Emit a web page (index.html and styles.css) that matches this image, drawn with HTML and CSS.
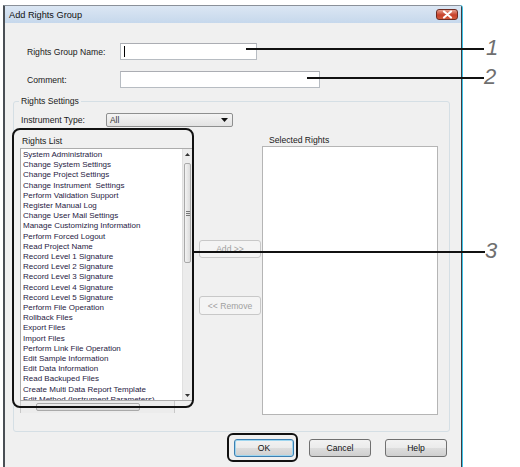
FILE: index.html
```html
<!DOCTYPE html>
<html>
<head>
<meta charset="utf-8">
<link rel="stylesheet" href="styles.css">
</head>
<body>
<div class="page">
  <div class="window">
    <div class="titlebar">
      <span class="title">Add Rights Group</span>
      <span class="close"><svg width="13" height="9" viewBox="0 0 13 9"><path d="M3 1.5 L10 7.5 M10 1.5 L3 7.5" stroke="#fff" stroke-width="2.2" stroke-linecap="round"/></svg></span>
    </div>
    <div class="body">
      <div class="row row1">
        <label class="lbl">Rights Group Name:</label>
        <div class="input w137"><span class="caret"></span></div>
      </div>
      <div class="row row2">
        <label class="lbl">Comment:</label>
        <div class="input w200"></div>
      </div>
      <fieldset class="group">
        <legend>Rights Settings</legend>
        <div class="instrow">
          <span class="lbl2">Instrument Type:</span>
          <div class="select"><span>All</span><svg width="7" height="4" viewBox="0 0 7 4"><path d="M0 0 H7 L3.5 4 Z" fill="#111"/></svg></div>
        </div>
        <div class="lists">
          <div class="col-left">
            <div class="cap">Rights List</div>
            <div class="listbox">
              <ul class="items">
                <li>System Administration</li>
                <li>Change System Settings</li>
                <li>Change Project Settings</li>
                <li>Change Instrument&nbsp; Settings</li>
                <li>Perform Validation Support</li>
                <li>Register Manual Log</li>
                <li>Change User Mail Settings</li>
                <li>Manage Customizing Information</li>
                <li>Perform Forced Logout</li>
                <li>Read Project Name</li>
                <li>Record Level 1 Signature</li>
                <li>Record Level 2 Signature</li>
                <li>Record Level 3 Signature</li>
                <li>Record Level 4 Signature</li>
                <li>Record Level 5 Signature</li>
                <li>Perform File Operation</li>
                <li>Rollback Files</li>
                <li>Export Files</li>
                <li>Import Files</li>
                <li>Perform Link File Operation</li>
                <li>Edit Sample Information</li>
                <li>Edit Data Information</li>
                <li>Read Backuped Files</li>
                <li>Create Multi Data Report Template</li>
                <li>Edit Method (Instrument Parameters)</li>
              </ul>
              <div class="vscroll">
                <div class="arrow up"><svg width="5" height="3" viewBox="0 0 5 3"><path d="M0 3 L2.5 0 L5 3 Z" fill="#333"/></svg></div>
                <div class="vtrack"><div class="vthumb"><span class="grip"></span></div></div>
                <div class="arrow down"><svg width="5" height="3" viewBox="0 0 5 3"><path d="M0 0 L2.5 3 L5 0 Z" fill="#333"/></svg></div>
              </div>
            </div>
            <div class="hscroll"><div class="hthumb"></div></div>
          </div>
          <div class="col-mid">
            <div class="btn disabled add">Add &gt;&gt;</div>
            <div class="btn disabled remove">&lt;&lt; Remove</div>
          </div>
          <div class="col-right">
            <div class="cap">Selected Rights</div>
            <div class="selbox"></div>
          </div>
        </div>
      </fieldset>
      <div class="buttons">
        <div class="btn ok">OK</div>
        <div class="btn cancel">Cancel</div>
        <div class="btn help">Help</div>
      </div>
    </div>
  </div>

  <div class="callout-box rights"></div>
  <div class="callout-box okbox"></div>
  <div class="leader l1"></div><span class="num n1">1</span>
  <div class="leader l2"></div><span class="num n2">2</span>
  <div class="leader l3"></div><span class="num n3">3</span>
</div>
</body>
</html>
```
FILE: styles.css
```css
* { box-sizing: border-box; }
html, body { margin: 0; padding: 0; background: #fff; }
body { font-family: "Liberation Sans", Arial, sans-serif; color: #1a1a1a; }

.page { position: relative; width: 520px; height: 467px; overflow: hidden; }

.window {
  margin: 5px 0 0 3px;
  width: 459px;
  height: 470px;
  border-left: 2px solid #4a4f55;
  border-right: 1px solid #3a3f45;
  border-top: 1px solid #8a9099;
  border-top-right-radius: 3px;
  box-shadow: 1px 0 0 #3fc2e6;
  background: #f0f0f0;
}

.titlebar {
  height: 17px;
  display: flex;
  align-items: center;
  justify-content: space-between;
  padding: 0 3px 0 4px;
  background: linear-gradient(#dbe6f3, #c6d8ec);
}
.title { font-size: 9.2px; color: #111; }
.close {
  width: 22px; height: 11px;
  display: flex; align-items: center; justify-content: center;
  border: 1px solid #6e2b22;
  border-radius: 3px;
  background: linear-gradient(#e7a08f, #c7412b 55%, #d25a3d);
  margin-top: -1px;
}

.row { display: flex; align-items: center; height: 17px; padding-left: 22px; }
.row1 { margin-top: 20px; }
.row2 { margin-top: 11px; }
.lbl { width: 93px; font-size: 8.6px; color: #1a1a1a; }
.input {
  height: 17px;
  background: #fff;
  border: 1px solid #b7bcc2;
  border-top-color: #abadb3;
  display: flex; align-items: center;
  padding-left: 3px;
}
.w137 { width: 137px; }
.w200 { width: 200px; }
.caret { width: 1px; height: 11px; background: #000; }

.group {
  margin: 8px 0 0 8px;
  width: 437px;
  height: 336px;
  border: 1px solid #d5dfe5;
  border-radius: 3px;
  padding: 0 0 0 6px;
  min-inline-size: 0;
}
.group legend {
  font-size: 8.6px;
  line-height: 11px;
  padding: 0 2px;
  margin-left: -1px;
  color: #1a1a1a;
}

.instrow { display: flex; align-items: center; margin-top: 6px; height: 14px; }
.lbl2 { width: 86px; font-size: 8.6px; padding-left: 1px; }
.select {
  width: 127px; height: 14px;
  border: 1px solid #8e8f8f;
  border-radius: 2px;
  background: linear-gradient(#f4f4f4, #e2e2e2);
  display: flex; align-items: center; justify-content: space-between;
  padding: 0 4px 0 3px;
  font-size: 8.4px;
  color: #333;
}

.lists {
  display: grid;
  grid-template-columns: 172px 70px 176px;
  column-gap: 0;
  margin-top: 7px;
}
.cap { font-size: 8.6px; line-height: 10px; height: 14px; padding-left: 2px; padding-top: 2px; }
.col-right .cap { padding-left: 7px; height: 12px; padding-top: 1px; }

.listbox {
  display: flex;
  height: 253px;
  background: #fff;
  border: 1px solid #acacac;
  border-right: none;
}
.items {
  list-style: none;
  margin: 0; padding: 1px 0 0 2px;
  flex: 1;
  font-size: 8px;
  line-height: 10.2px;
  color: #27213f;
  overflow: hidden;
  white-space: nowrap;
}
.vscroll {
  width: 10px;
  display: flex; flex-direction: column;
  background: #ececec;
  border-left: 1px solid #e0e0e0;
}
.arrow { height: 10px; display: flex; align-items: center; justify-content: center; }
.vtrack { flex: 1; padding-top: 4px; }
.vthumb {
  height: 100px;
  margin: 0 1px;
  border: 1px solid #a9a9a9;
  border-radius: 2px;
  background: linear-gradient(90deg, #f3f3f3, #dcdcdc);
  display: flex; align-items: center; justify-content: center;
}
.grip { width: 4px; height: 5px; border-top: 1px solid #777; border-bottom: 1px solid #777; position: relative; }
.grip::after { content: ""; position: absolute; left: 0; right: 0; top: 1px; border-top: 1px solid #777; }

.hscroll {
  width: 155px; height: 12px;
  background: #ececec;
  border-left: 1px solid #c8c8c8;
  border-right: 1px solid #c8c8c8;
  padding: 2px 0 0 15px;
}
.hthumb {
  width: 104px; height: 8px;
  border: 1px solid #a9a9a9;
  border-radius: 2px;
  background: linear-gradient(#eee, #d8d8d8);
}

.col-mid { display: flex; flex-direction: column; padding: 106px 1px 0 7px; }
.btn {
  height: 18px;
  border: 1px solid #707070;
  border-radius: 3px;
  background: linear-gradient(#f2f2f2 0%, #ebebeb 50%, #dddddd 51%, #cfcfcf 100%);
  font-size: 8.6px;
  color: #111;
  display: flex; align-items: center; justify-content: center;
}
.btn.disabled {
  border-color: #c8c8c8;
  background: #f4f4f4;
  color: #a0a0a0;
}
.remove { margin-top: 38px; height: 19px; }

.selbox {
  height: 269px;
  background: #fff;
  border: 1px solid #b5b5b5;
}

.buttons {
  display: flex;
  justify-content: flex-end;
  gap: 15px;
  margin-top: 7px;
  padding-right: 14px;
}
.buttons .ok { width: 60px; border-color: #3c7fb1; box-shadow: inset 0 0 0 1px #9fd6ef; }
.buttons .cancel { width: 62px; }
.buttons .help { width: 62px; margin-left: -1px; }

/* callouts overlay */
.callout-box { position: absolute; border: 2px solid #111; }
.rights { left: 12px; top: 128px; width: 182px; height: 280px; border-radius: 8px; }
.okbox { left: 227px; top: 433px; width: 71px; height: 29px; border-radius: 6px; }
.leader { position: absolute; height: 2px; background: #111; }
.l1 { left: 246px; top: 48px; width: 238px; }
.l2 { left: 307px; top: 77px; width: 177px; }
.l3 { left: 193px; top: 251px; width: 292px; }
.num {
  position: absolute;
  font-style: italic;
  font-size: 22px;
  line-height: 22px;
  color: #6f6f6f;
}
.n1 { left: 486px; top: 37px; }
.n2 { left: 484px; top: 66px; }
.n3 { left: 485px; top: 240px; }
```
